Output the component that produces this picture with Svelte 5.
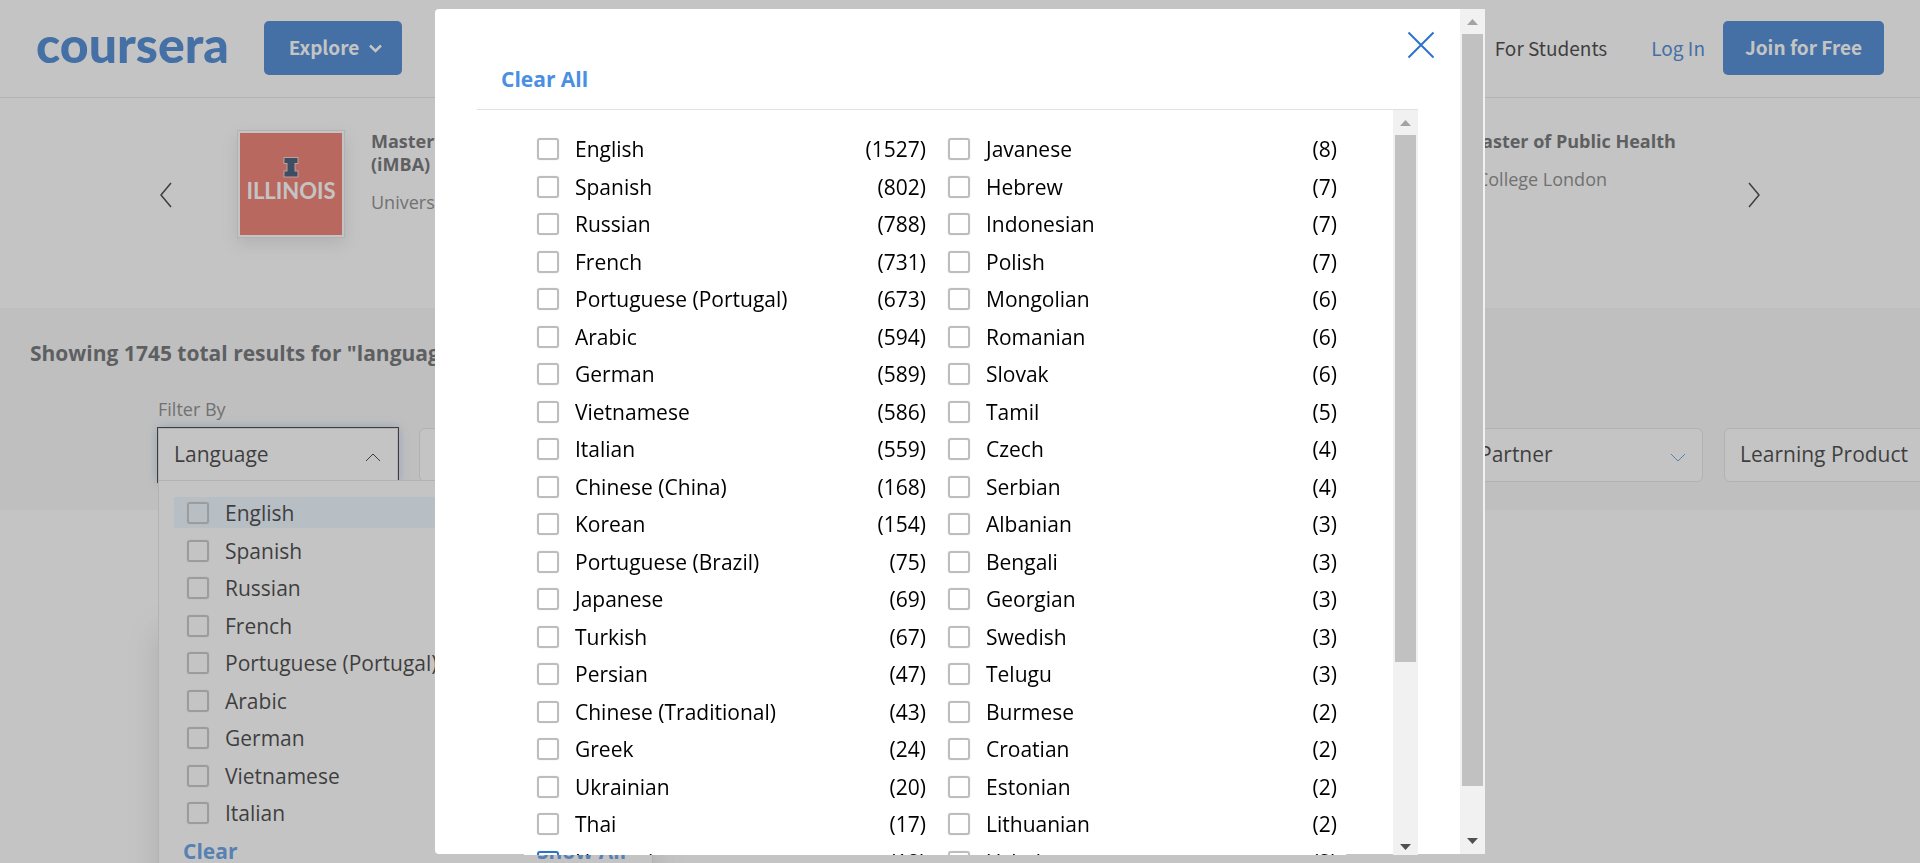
<script>
  const languages = [
    ['English', 1527], ['Spanish', 802], ['Russian', 788], ['French', 731],
    ['Portuguese (Portugal)', 673], ['Arabic', 594], ['German', 589], ['Vietnamese', 586],
    ['Italian', 559], ['Chinese (China)', 168], ['Korean', 154], ['Portuguese (Brazil)', 75],
    ['Japanese', 69], ['Turkish', 67], ['Persian', 47], ['Chinese (Traditional)', 43],
    ['Greek', 24], ['Ukrainian', 20], ['Thai', 17], ['Hungarian', 12]
  ];
  const moreLanguages = [
    ['Javanese', 8], ['Hebrew', 7], ['Indonesian', 7], ['Polish', 7],
    ['Mongolian', 6], ['Romanian', 6], ['Slovak', 6], ['Tamil', 5],
    ['Czech', 4], ['Serbian', 4], ['Albanian', 3], ['Bengali', 3],
    ['Georgian', 3], ['Swedish', 3], ['Telugu', 3], ['Burmese', 2],
    ['Croatian', 2], ['Estonian', 2], ['Lithuanian', 2], ['Uzbek', 2]
  ];
  const columns = [languages, moreLanguages];
  const quickPicks = languages.slice(0, 9).map(([name]) => name);
  const filters = ['Level', 'Duration', 'Skills', 'Subject', 'Partner', 'Learning Product'];
</script>

{#snippet scrollbar(thumb, rest)}
  <div class="scrollbar" aria-hidden="true">
    <svg class="arrow" viewBox="0 0 25 25"><path d="M7 16L12.500 10L18 16z" fill="#a3a3a3" /></svg>
    <div class="thumb" style="flex-grow: {thumb}"></div>
    <div style="flex-grow: {rest}"></div>
    <svg class="arrow" viewBox="0 0 25 25"><path d="M7 9L12.500 15L18 9z" fill="#505050" /></svg>
  </div>
{/snippet}

<div class="page">
  <header class="topbar">
    <a class="brand" href="#home">coursera</a>
    <button class="primary explore">
      Explore
      <svg width="13" height="9" viewBox="0 0 13 9" fill="none" stroke="#fff" stroke-width="2.500"><path d="M1 1.500L6.500 7L12 1.500" /></svg>
    </button>
    <nav>
      <a class="students" href="#students">For Students</a>
      <a class="login" href="#login">Log In</a>
      <button class="primary join">Join for Free</button>
    </nav>
  </header>

  <section class="carousel">
    <button class="arrow-button" aria-label="Previous">
      <svg width="12" height="26" viewBox="0 0 12 26" fill="none" stroke="#1f1f1f" stroke-width="1.500"><path d="M11 1L1 13L11 25" /></svg>
    </button>
    <div class="slides">
      <article class="slide">
        <div class="logo-card">
          <svg viewBox="0 0 102 102" role="img" aria-label="Illinois">
            <rect width="102" height="102" fill="#eb6655" />
            <path d="M44.500 25h13v5h-3v8.500h3v5h-13v-5h3v-8.500h-3z" fill="#1e3a5f" stroke="#fff" stroke-opacity="0.6" stroke-width="2" paint-order="stroke" />
            <text x="51" y="66" text-anchor="middle" fill="#fff" font-family="Lato, sans-serif" font-weight="700" font-size="22">ILLINOIS</text>
          </svg>
        </div>
        <div class="slide-text">
          <h2>Master of Business Administration (iMBA)</h2>
          <p>University of Illinois</p>
        </div>
      </article>
      <article class="slide">
        <div class="slide-text narrow">
          <h2>Global Master of Public Health</h2>
          <p>Imperial College London</p>
        </div>
      </article>
    </div>
    <button class="arrow-button" aria-label="Next">
      <svg width="12" height="26" viewBox="0 0 12 26" fill="none" stroke="#1f1f1f" stroke-width="1.500"><path d="M1 1L11 13L1 25" /></svg>
    </button>
  </section>

  <section class="search">
    <h1>Showing 1745 total results for "language"</h1>
    <p class="filter-title">Filter By</p>
    <div class="filters">
      <div class="filter-slot">
        <button class="filter active" aria-expanded="true">
          Language
          <svg width="16" height="9" viewBox="0 0 16 9" fill="none" stroke="#1f1f1f" stroke-width="1"><path d="M1 8L8 1L15 8" /></svg>
        </button>
        <div class="menu">
          <ul>
            {#each quickPicks as name, i}
              <li class:hovered={i === 0}>
                <label><input type="checkbox" /><span>{name}</span></label>
              </li>
            {/each}
          </ul>
          <div class="menu-actions">
            <button class="text-button">Clear</button>
            <button class="text-button">Show All</button>
          </div>
        </div>
      </div>
      {#each filters as name}
        <button class="filter">
          {name}
          <svg width="16" height="9" viewBox="0 0 16 9" fill="none" stroke="#4a90e2" stroke-width="1"><path d="M1 1L8 8L15 1" /></svg>
        </button>
      {/each}
    </div>
  </section>
</div>

<div class="overlay">
  <div class="dialog" role="dialog" aria-modal="true" aria-label="Languages">
    <div class="dialog-main">
      <div class="dialog-head">
        <button class="text-button">Clear All</button>
        <button class="close" aria-label="Close">
          <svg width="28" height="28" viewBox="0 0 28 28" fill="none" stroke="#2a73cc" stroke-width="2"><path d="M1.500 1.500L26.500 26.500M26.500 1.500L1.500 26.500" /></svg>
        </button>
      </div>
      <div class="dialog-body">
        <div class="columns">
          {#each columns as column, c}
            <ul>
              {#each column as [name, count], i}
                <li>
                  <label>
                    <input type="checkbox" class:focused={c === 0 && i === 19} />
                    <span>{name}</span>
                    <span class="count">({count})</span>
                  </label>
                </li>
              {/each}
            </ul>
          {/each}
        </div>
        {@render scrollbar(527, 173)}
      </div>
    </div>
    {@render scrollbar(752, 43)}
  </div>
</div>

<style>
  :global(body) {
    margin: 0;
    overflow: hidden;
    background: #fff;
  }
  .page,
  .overlay {
    font-family: "Open Sans", sans-serif;
    font-size: 21px;
    color: #1f1f1f;
  }
  .page {
    height: 100vh;
    overflow: hidden;
  }
  *,
  *::before {
    box-sizing: border-box;
  }
  button {
    font: inherit;
    color: inherit;
    border: 0;
    padding: 0;
    background: none;
  }
  a {
    text-decoration: none;
    color: inherit;
  }
  ul {
    list-style: none;
    margin: 0;
    padding: 0;
  }
  h1,
  h2,
  p {
    margin: 0;
  }
  svg {
    display: block;
    flex: none;
  }

  .topbar {
    display: flex;
    align-items: center;
    height: 98px;
    padding: 0 36px 2px;
    border-bottom: 1px solid #e1e1e1;
    font-family: "Noto Sans CJK SC", "Open Sans", sans-serif;
    font-size: 19px;
  }
  .brand {
    width: 228px;
    font: 900 50px/60px Lato, sans-serif;
    color: #2a73cc;
    margin-bottom: 8px;
  }
  .primary {
    display: flex;
    align-items: center;
    justify-content: center;
    gap: 10px;
    height: 54px;
    padding-bottom: 2px;
    border-radius: 5px;
    background: #2a73cc;
    color: #fff;
    font-weight: 700;
  }
  .explore svg {
    margin-top: 4px;
  }
  .explore {
    width: 138px;
    padding-left: 5px;
  }
  .join {
    width: 161px;
  }
  nav {
    display: flex;
    align-items: center;
    margin-left: auto;
  }
  .students {
    margin-right: 44px;
  }
  .login {
    margin-right: 18px;
    color: #2a73cc;
  }

  .carousel {
    display: flex;
    height: 210px;
    padding: 32px 160px 0;
  }
  .arrow-button {
    height: 130px;
  }
  .slides {
    display: flex;
    flex: 1;
    justify-content: space-between;
    padding: 0 73px 0 65px;
  }
  .slide {
    display: flex;
    gap: 26px;
  }
  .logo-card {
    width: 108px;
    height: 108px;
    padding: 2px;
    border: 1px solid #e1e1e1;
    box-shadow: 0 6px 16px rgba(0, 0, 0, 0.12);
  }
  .slide-text {
    width: 330px;
    font-size: 18px;
    line-height: 23px;
  }
  .narrow {
    width: 272px;
    white-space: nowrap;
  }
  .slide h2 {
    margin-bottom: 15px;
    font-size: 18px;
    font-weight: 700;
    color: #55575b;
  }
  .slide p {
    color: #757575;
  }

  .search {
    height: 202px;
    padding: 29px 30px 0;
    background: #f7f7f7;
  }
  h1 {
    font-size: 21px;
    line-height: 32px;
    font-weight: 700;
    color: #55575b;
  }
  .filter-title {
    margin: 27px 0 6px 128px;
    font-size: 18px;
    line-height: 26px;
    color: #757575;
  }
  .filters {
    display: flex;
    gap: 21px;
    margin-left: 128px;
  }
  .filter-slot {
    position: relative;
    flex: none;
  }
  .filter {
    display: flex;
    flex: none;
    align-items: center;
    justify-content: space-between;
    width: 240px;
    height: 54px;
    padding: 0 16px 2px 15px;
    border: 1px solid #e1e1e1;
    border-radius: 6px;
    background: #fff;
    white-space: nowrap;
  }
  .filter.active {
    outline: 1px solid #1f1f1f;
    border-radius: 0;
    box-shadow: 0 0 10px rgba(42, 115, 204, 0.4);
  }
  .filter svg {
    margin-top: 6px;
  }
  .menu {
    position: absolute;
    top: 52px;
    left: 0;
    width: 495px;
    padding: 16px 15px 24px;
    border: 1px solid #e1e1e1;
    background: #fff;
    box-shadow: 0 150px 30px rgba(0, 0, 0, 0.15);
  }
  li {
    height: 37px;
  }
  li:nth-child(odd) {
    height: 38px;
  }
  label {
    display: flex;
    align-items: center;
    gap: 16px;
    height: 31px;
  }
  label span {
    padding-top: 1px;
    line-height: 30px;
  }
  .menu label {
    padding-left: 13px;
  }
  .hovered label {
    background: #eaf5ff;
  }
  input {
    appearance: none;
    flex: none;
    width: 22px;
    height: 22px;
    margin: 0;
    border: 2px solid #bdbdbd;
    border-radius: 3px;
    box-shadow: 0 0 1px #bdbdbd;
  }
  .focused {
    border-color: #2a73cc;
  }
  .text-button {
    font-size: 21px;
    line-height: 28px;
    font-weight: 700;
    color: #4a90e2;
  }
  .menu-actions {
    display: grid;
    grid-template-columns: 354px 1fr;
    justify-items: start;
    padding: 2px 0 0 9px;
  }

  .overlay {
    position: fixed;
    inset: 0;
    display: flex;
    justify-content: center;
    padding: 9px 0;
    background: rgba(107, 107, 107, 0.4);
    color: #000;
  }
  .dialog {
    display: flex;
    width: 1050px;
    border-radius: 4px 0 0 4px;
    background: #fff;
  }
  .dialog-main {
    display: flex;
    flex: 1;
    flex-direction: column;
    padding: 0 42px;
  }
  .dialog-head {
    display: flex;
    flex: none;
    justify-content: space-between;
    height: 101px;
    padding: 22px 0 0 24px;
    border-bottom: 1px solid #e1e1e1;
  }
  .dialog-head .text-button {
    margin-top: 34px;
    align-self: flex-start;
  }
  .close {
    align-self: flex-start;
    margin-right: -17px;
  }
  .dialog-body {
    display: flex;
    flex: 1;
    min-height: 0;
    margin-bottom: -1px;
    overflow: hidden;
    justify-content: space-between;
  }
  .columns {
    display: flex;
    width: 822px;
    margin-left: 47px;
    padding-top: 23px;
    background: #fff;
  }
  .columns ul {
    flex: 1;
    padding: 0 9px 0 13px;
  }
  .count {
    margin-left: auto;
  }
  .scrollbar {
    display: flex;
    flex: none;
    flex-direction: column;
    width: 25px;
    background: #f1f1f1;
  }
  .dialog-body .scrollbar {
    height: calc(100% + 5px);
  }
  .arrow {
    width: 25px;
    height: 25px;
  }
  .thumb {
    margin: 0 2px;
    background: #c1c1c1;
  }
</style>
